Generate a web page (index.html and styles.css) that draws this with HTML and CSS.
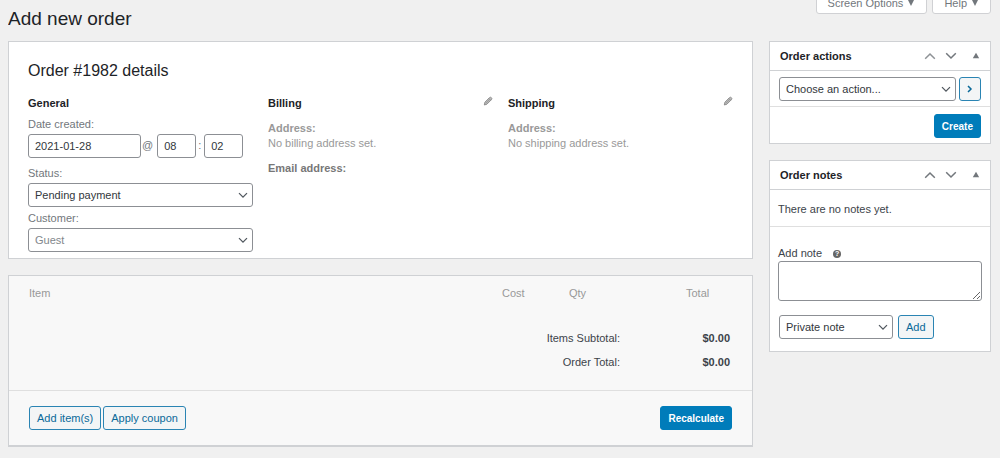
FILE: index.html
```html
<!DOCTYPE html>
<html lang="en">
<head>
<meta charset="utf-8">
<title>Add new order</title>
<link rel="stylesheet" href="styles.css">
</head>
<body>
<svg class="sprite" aria-hidden="true">
  <symbol id="up" viewBox="0 0 12 8"><path d="M1.200 6.800 6 2l4.800 4.800" fill="none" stroke="currentColor" stroke-width="1.500"/></symbol>
  <symbol id="down" viewBox="0 0 12 8"><path d="M1.200 1.200 6 6l4.800-4.800" fill="none" stroke="currentColor" stroke-width="1.500"/></symbol>
  <symbol id="toggle" viewBox="0 0 12 8"><path d="M6 .8 9.200 6.200H2.800z" fill="currentColor"/></symbol>
  <symbol id="caret" viewBox="0 0 8 8"><path d="M1 1h6L4 7z" fill="currentColor"/></symbol>
  <symbol id="pencil" viewBox="0 0 10 10"><path d="M1.300 9 1.900 6.200 6.400 1.700Q7.400.7 8.400 1.700 9.400 2.700 8.400 3.700L3.900 8.200z" fill="#bbb" stroke="#888" stroke-width=".9"/><path d="m2.800 7.300 4-4M5.800 2.300l2 2" stroke="#888" stroke-width=".6"/></symbol>
</svg>
<header class="topbar">
  <h1>Add new order</h1>
  <nav class="tabs" aria-label="Screen">
    <button class="tab" type="button">Screen Options <svg class="caret"><use href="#caret"/></svg></button>
    <button class="tab" type="button">Help <svg class="caret"><use href="#caret"/></svg></button>
  </nav>
</header>
<div class="layout">
  <main class="main">
    <section class="panel details">
      <h2>Order #1982 details</h2>
      <div class="columns">
        <div>
          <h3>General</h3>
          <div class="field">
            <label for="date">Date created:</label>
            <div class="date-row">
              <input class="control date" id="date" value="2021-01-28">
              <span class="at">@</span>
              <input class="control time" aria-label="Hour" value="08">
              <span class="colon">:</span>
              <input class="control time" aria-label="Minute" value="02">
            </div>
          </div>
          <div class="field">
            <label for="status">Status:</label>
            <div class="select"><select class="control" id="status"><option>Pending payment</option></select><svg><use href="#down"/></svg></div>
          </div>
          <div class="field">
            <label for="customer">Customer:</label>
            <div class="select"><select class="control guest" id="customer"><option>Guest</option></select><svg><use href="#down"/></svg></div>
          </div>
        </div>
        <div>
          <div class="column-head"><h3>Billing</h3><button class="icon" type="button" aria-label="Edit billing"><svg class="pencil"><use href="#pencil"/></svg></button></div>
          <p class="address"><strong>Address:</strong><br>No billing address set.</p>
          <p class="email"><strong>Email address:</strong></p>
        </div>
        <div>
          <div class="column-head"><h3>Shipping</h3><button class="icon" type="button" aria-label="Edit shipping"><svg class="pencil"><use href="#pencil"/></svg></button></div>
          <p class="address"><strong>Address:</strong><br>No shipping address set.</p>
        </div>
      </div>
    </section>
    <section class="panel items">
      <table class="lines">
        <thead><tr><th>Item</th><th class="cost">Cost</th><th class="qty">Qty</th><th class="total">Total</th></tr></thead>
      </table>
      <table class="totals">
        <tbody>
          <tr><th scope="row">Items Subtotal:</th><td>$0.00</td></tr>
          <tr><th scope="row">Order Total:</th><td>$0.00</td></tr>
        </tbody>
      </table>
      <div class="items-actions">
        <button class="btn" type="button">Add item(s)</button>
        <button class="btn" type="button">Apply coupon</button>
        <button class="btn primary" type="button">Recalculate</button>
      </div>
    </section>
  </main>
  <aside class="side">
    <section class="panel">
      <div class="panel-head">
        <h2>Order actions</h2>
        <button class="icon faded" type="button" aria-label="Move up"><svg><use href="#up"/></svg></button>
        <button class="icon" type="button" aria-label="Move down"><svg><use href="#down"/></svg></button>
        <button class="icon toggle" type="button" aria-label="Toggle panel"><svg><use href="#toggle"/></svg></button>
      </div>
      <div class="action-row">
        <div class="select"><select class="control" aria-label="Order action"><option>Choose an action...</option></select><svg><use href="#down"/></svg></div>
        <button class="btn go" type="button" aria-label="Apply"><svg viewBox="0 0 6 8"><path d="m1 1 3 3-3 3" fill="none" stroke="currentColor" stroke-width="1.500"/></svg></button>
      </div>
      <div class="create-row"><button class="btn primary" type="button">Create</button></div>
    </section>
    <section class="panel">
      <div class="panel-head">
        <h2>Order notes</h2>
        <button class="icon" type="button" aria-label="Move up"><svg><use href="#up"/></svg></button>
        <button class="icon" type="button" aria-label="Move down"><svg><use href="#down"/></svg></button>
        <button class="icon toggle" type="button" aria-label="Toggle panel"><svg><use href="#toggle"/></svg></button>
      </div>
      <p class="empty">There are no notes yet.</p>
      <div class="note-form">
        <div class="note-label"><label for="note">Add note</label><span class="help">?</span></div>
        <textarea class="control" id="note"></textarea>
        <div class="note-row">
          <div class="select"><select class="control" aria-label="Note type"><option>Private note</option></select><svg><use href="#down"/></svg></div>
          <button class="btn" type="button">Add</button>
        </div>
      </div>
    </section>
  </aside>
</div>
</body>
</html>
```
FILE: styles.css
```css
* { box-sizing: border-box; }
body {
  margin: 0;
  padding: 0 9px 10px 8px;
  background: #f0f0f0;
  color: #3c434a;
  font: 11px/15px "Liberation Sans", Arial, sans-serif;
}
h1, h2, h3, p { margin: 0; }
button, input, select, textarea { font: inherit; color: inherit; }
svg { display: block; width: 12px; height: 8px; }
.sprite { position: absolute; width: 0; height: 0; }

.topbar { display: flex; justify-content: space-between; align-items: flex-start; height: 41px; overflow: hidden; }
h1 { padding-top: 8px; font-size: 19px; line-height: 22px; font-weight: 400; color: #1d2327; }
.tabs { display: flex; gap: 5px; margin-top: -8px; }
.tab {
  display: flex; align-items: center; gap: 4px;
  height: 22px; padding: 0 11px;
  border: 1px solid #d0d1d4; border-radius: 0 0 3px 3px;
  background: #fff; color: #72777c;
}
.caret { width: 8px; height: 8px; }

.layout { display: grid; grid-template-columns: minmax(0, 1fr) 222px; gap: 16px; align-items: start; }
.main, .side { display: grid; gap: 16px; }
.panel { border: 1px solid #cfd1d4; background: #fff; }

.details { padding: 18px 19px 6px; }
.details h2 { font-size: 16px; line-height: 22px; font-weight: 400; color: #1d2327; }
.columns { display: grid; grid-template-columns: repeat(3, minmax(0, 1fr)); gap: 15px; padding-top: 14px; }
h3 { font-size: 11px; line-height: 15px; color: #1d2327; }
.field { padding-top: 6px; color: #72777c; }
.field label { display: block; padding-bottom: 2px; }
.field + .field + .field { padding-top: 4px; }
.date-row { display: flex; line-height: 22px; }
.control {
  height: 24px; padding: 0 6px;
  border: 1px solid #8c8f94; border-radius: 3px;
  background: #fff; color: #32373c;
}
.field + .field { padding-top: 8px; }
.date { width: 113px; }
.at { padding: 0 4px 0 1px; }
.colon { padding: 0 3px 0 2px; }
.time { width: 39px; }
.select { display: grid; align-items: center; }
.select > * { grid-area: 1 / 1; }
.select select { width: 100%; appearance: none; }
.select svg { width: 10px; height: 7px; justify-self: end; margin-right: 5px; color: #50575e; pointer-events: none; }
.control.guest { color: #82878c; }
.column-head { display: flex; justify-content: space-between; align-items: flex-start; }
.icon { display: block; padding: 0; border: 0; background: none; color: #72777c; }
.pencil { width: 10px; height: 10px; }
.address { padding-top: 10px; color: #999; }
.email { padding-top: 10px; color: #777; }

.items { background: #f8f8f8; border-bottom-width: 2px; }
table { border-collapse: collapse; }
th, td { padding: 0; text-align: left; }
.lines { width: 100%; color: #999; }
.lines th { padding-top: 10px; font-weight: 400; }
.lines th:first-child { padding-left: 20px; }
.lines .cost { width: 67px; }
.lines .qty { width: 117px; }
.lines .total { width: 66px; }
.totals { margin: 25px 22px 16px auto; text-align: right; }
.totals tr { height: 24px; }
.totals th { font-weight: 400; }
.totals th, .totals td { text-align: right; }
.totals td { width: 110px; font-weight: 700; }
.items-actions { display: flex; gap: 2px; padding: 15px 20px; border-top: 1px solid #dfdfdf; }
.items-actions .primary { margin-left: auto; }
.btn {
  height: 24px; padding: 0 7px;
  border: 1px solid #2a84b3; border-radius: 3px;
  background: #f3f5f6; color: #0a6999;
}
.btn.primary { border-color: #007cba; background: #007cba; color: #fff; font-size: 10px; font-weight: 700; }

.panel-head { display: flex; align-items: center; gap: 9px; height: 29px; padding: 0 8px 0 10px; border-bottom: 1px solid #cfd1d4; }
.panel-head h2 { margin-right: auto; font-size: 11px; line-height: 15px; color: #1d2327; }
.toggle { margin-left: 4px; }
.faded { opacity: .8; }
.action-row { display: flex; gap: 3px; padding: 6px 9px 5px; border-bottom: 1px solid #dfdfdf; }
.action-row .select { flex: 1; }
.go { display: grid; place-items: center; width: 22px; padding: 0; }
.go svg { width: 6px; height: 8px; }
.create-row { display: flex; justify-content: flex-end; padding: 7px 9px 5px; }
.empty { padding: 12px 8px 9px; border-bottom: 1px solid #dfdfdf; }
.note-form { padding: 19px 8px 12px; }
.note-label { display: flex; align-items: center; gap: 11px; }
.help { width: 8px; height: 8px; border-radius: 50%; background: #666; color: #fff; font-size: 7px; line-height: 8px; font-weight: 700; text-align: center; }
textarea.control { display: block; width: 100%; height: 40px; resize: vertical; }
.note-row { display: flex; gap: 5px; padding: 14px 0 0 1px; }
.note-row .select { width: 114px; }
```
